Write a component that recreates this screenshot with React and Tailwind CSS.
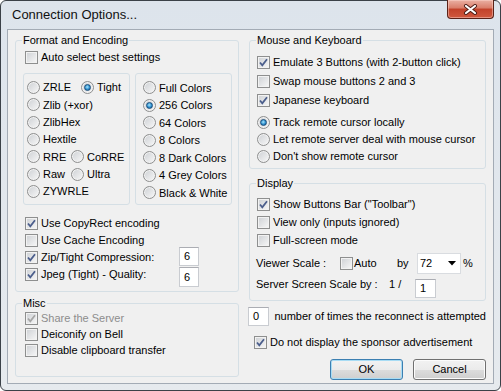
import React from 'react';

const CheckBox = ({ checked, disabled }) => (
    <span className="w-[13px] h-[13px] shrink-0 border border-[#8e8f8f] bg-gradient-to-br from-[#cdd0d4] to-[#f8f8f8] shadow-[inset_0_0_0_1px_#f2f2f2] flex items-center justify-center">
        {checked && (
            <svg width="11" height="11" viewBox="0 0 11 11">
                <path d="M2 5.5 L4.3 8.3 L9 2.2" fill="none" stroke={disabled ? '#a6a6a6' : '#4b5e8c'} strokeWidth="1.8" />
            </svg>
        )}
    </span>
);

const RadioDot = ({ checked }) => (
    <span className="w-[13px] h-[13px] shrink-0 rounded-full border border-[#8e8f8f] bg-gradient-to-br from-[#cdd0d4] to-[#f8f8f8] shadow-[inset_0_0_0_1px_#f2f2f2] flex items-center justify-center">
        {checked && (
            <span className="w-[7px] h-[7px] rounded-full border border-[#1b4f7c] bg-[radial-gradient(circle_at_45%_40%,#a9e6fc,#2d8fcf_55%,#0f4d86)]" />
        )}
    </span>
);

const Check = ({ checked, disabled, label, className = '' }) => (
    <div className={`flex items-center gap-[3px] ${className}`}>
        <CheckBox checked={checked} disabled={disabled} />
        <span className={`whitespace-nowrap ${disabled ? 'text-[#8d8d8d]' : ''}`}>{label}</span>
    </div>
);

const Radio = ({ checked, label, className = '' }) => (
    <div className={`flex items-center gap-[3px] ${className}`}>
        <RadioDot checked={checked} />
        <span className="whitespace-nowrap">{label}</span>
    </div>
);

const Field = ({ value, className = '' }) => (
    <div className={`bg-white border border-[#c9ccd1] border-t-[#abadb3] flex items-center pl-[4px] ${className}`}>
        {value}
    </div>
);

export default function App() {
    const groupBox = 'border border-[#d5dfe5] rounded-[3px] min-w-0';
    const legend = '-ml-[1px] px-[1px] leading-[13px]';

    return (
        <div className="w-[501px] h-[391px] bg-white font-['Liberation_Sans',Arial,sans-serif] text-[11px] text-black">
            <div className="w-full h-full rounded-[6px] border border-[#3b4148] bg-gradient-to-b from-[#dde4ec] to-[#e6eaee] flex flex-col px-[6px] pb-[6px]">
                {/* Title bar */}
                <div className="h-[28px] flex justify-between items-start">
                    <div className="h-[28px] flex items-center pl-[5px] text-[13px] text-[#111]">Connection Options...</div>
                    <div className="-mt-[1px] w-[47px] h-[19px] rounded-b-[4px] border border-[#5a2218] border-t-0 bg-[linear-gradient(#eab0a3,#d97d69_45%,#c2422a_50%,#d0583e)] flex items-center justify-center shadow-[inset_0_0_0_1px_rgba(255,220,210,0.45)]">
                        <svg width="15" height="11" viewBox="0 0 15 11">
                            <path d="M3 2 L12 9 M12 2 L3 9" stroke="#4a1b14" strokeWidth="4" strokeLinecap="round" />
                            <path d="M3 2 L12 9 M12 2 L3 9" stroke="#fff" strokeWidth="2.2" strokeLinecap="round" />
                        </svg>
                    </div>
                </div>

                {/* Client area */}
                <div className="flex-1 border border-[#a3abb5] bg-[#f0f0f0] flex gap-[10px] px-[7px] pt-[4px]">
                    {/* Left column */}
                    <div className="w-[224px] flex flex-col">
                        <fieldset className={`${groupBox} h-[258px] pl-[7px] pr-[6px]`}>
                            <legend className={legend}>Format and Encoding</legend>
                            <Check label="Auto select best settings" className="h-[16px] mt-[2px] ml-[2px]" />
                            <div className="flex justify-between mt-[8px]">
                                <div className={`${groupBox} w-[107px] h-[132px] pl-[3px] pt-[5px] flex flex-col`}>
                                    <div className="h-[17.33px] flex items-center">
                                        <Radio label="ZRLE" className="w-[54px]" />
                                        <Radio checked label="Tight" />
                                    </div>
                                    <Radio label="Zlib (+xor)" className="h-[17.33px]" />
                                    <Radio label="ZlibHex" className="h-[17.33px]" />
                                    <Radio label="Hextile" className="h-[17.33px]" />
                                    <div className="h-[17.33px] flex items-center">
                                        <Radio label="RRE" className="w-[44px]" />
                                        <Radio label="CoRRE" />
                                    </div>
                                    <div className="h-[17.33px] flex items-center">
                                        <Radio label="Raw" className="w-[44px]" />
                                        <Radio label="Ultra" />
                                    </div>
                                    <Radio label="ZYWRLE" className="h-[17.33px]" />
                                </div>
                                <div className={`${groupBox} w-[97px] h-[132px] pl-[7px] pt-[5px] flex flex-col`}>
                                    <Radio label="Full Colors" className="h-[17.5px]" />
                                    <Radio checked label="256 Colors" className="h-[17.5px]" />
                                    <Radio label="64 Colors" className="h-[17.5px]" />
                                    <Radio label="8 Colors" className="h-[17.5px]" />
                                    <Radio label="8 Dark Colors" className="h-[17.5px]" />
                                    <Radio label="4 Grey Colors" className="h-[17.5px]" />
                                    <Radio label="Black &amp; White" className="h-[17.5px]" />
                                </div>
                            </div>
                            <div className="flex flex-col mt-[10px] ml-[2px]">
                                <Check checked label="Use CopyRect encoding" className="h-[17px]" />
                                <Check label="Use Cache Encoding" className="h-[17px]" />
                                <div className="h-[17px] flex items-start">
                                    <Check checked label="Zip/Tight Compression:" className="h-[17px] w-[154px]" />
                                    <Field value="6" className="w-[20px] h-[19px] -mt-[2px]" />
                                </div>
                                <div className="h-[17px] flex items-start">
                                    <Check checked label="Jpeg (Tight) - Quality:" className="h-[17px] w-[154px]" />
                                    <Field value="6" className="w-[20px] h-[20px] mt-[1px]" />
                                </div>
                            </div>
                        </fieldset>

                        <fieldset className={`${groupBox} h-[80px] mt-[5px] pl-[9px]`}>
                            <legend className={legend + ' -ml-[3px]'}>Misc</legend>
                            <Check checked disabled label="Share the Server" className="h-[16px]" />
                            <Check label="Deiconify on Bell" className="h-[16px]" />
                            <Check label="Disable clipboard transfer" className="h-[16px]" />
                        </fieldset>
                    </div>

                    {/* Right column */}
                    <div className="w-[237px] flex flex-col">
                        <fieldset className={`${groupBox} h-[135px] pl-[7px]`}>
                            <legend className={legend}>Mouse and Keyboard</legend>
                            <div className="mt-[6px] flex flex-col">
                                <Check checked label="Emulate 3 Buttons (with 2-button click)" className="h-[19px]" />
                                <Check label="Swap mouse buttons 2 and 3" className="h-[19px]" />
                                <Check checked label="Japanese keyboard" className="h-[19px]" />
                            </div>
                            <div className="mt-[4px] flex flex-col">
                                <Radio checked label="Track remote cursor locally" className="h-[17px]" />
                                <Radio label="Let remote server deal with mouse cursor" className="h-[17px]" />
                                <Radio label="Don't show remote cursor" className="h-[17px]" />
                            </div>
                        </fieldset>

                        <fieldset className={`${groupBox} h-[124px] mt-[8px] pl-[7px]`}>
                            <legend className={legend}>Display</legend>
                            <div className="mt-[5px] flex flex-col">
                                <Check checked label={'Show Buttons Bar ("Toolbar")'} className="h-[18px]" />
                                <Check label="View only (inputs ignored)" className="h-[18px]" />
                                <Check label="Full-screen mode" className="h-[18px]" />
                            </div>
                            <div className="mt-[4px] h-[21px] -ml-[1px] flex items-center">
                                <span className="w-[84px]">Viewer Scale :</span>
                                <div className="w-[57px] flex items-center gap-[1px]">
                                    <CheckBox />
                                    <span>Auto</span>
                                </div>
                                <span className="w-[20px]">by</span>
                                <div className="w-[44px] h-[21px] bg-white border border-[#d9dce0] flex items-center justify-between pl-[2px] pr-[4px]">
                                    <span>72</span>
                                    <svg width="8" height="5" viewBox="0 0 8 5">
                                        <path d="M0 0 H8 L4 4.5 Z" fill="#000" />
                                    </svg>
                                </div>
                                <span className="ml-[2px]">%</span>
                            </div>
                            <div className="mt-[2px] -ml-[1px] flex items-start">
                                <span className="w-[133px] h-[16px] flex items-center">Server Screen Scale by :</span>
                                <span className="w-[26px] h-[16px] flex items-center">1 /</span>
                                <Field value="1" className="w-[21px] h-[19px] mt-[3px]" />
                            </div>
                        </fieldset>

                        <div className="mt-[6px] -ml-[1px] flex items-center">
                            <Field value="0" className="w-[24px] h-[19px] pl-[3px]" />
                            <span className="ml-[5px] whitespace-nowrap">number of times the reconnect is attempted</span>
                        </div>

                        <Check checked label="Do not display the sponsor advertisement" className="h-[16px] mt-[8px] ml-[5px]" />

                        <div className="mt-[9px] flex justify-end gap-[10px]">
                            <button className="w-[73px] h-[21px] rounded-[3px] border border-[#3c7fb1] bg-[linear-gradient(#f2f2f2,#ebebeb_50%,#dddddd_50%,#cfcfcf)] shadow-[inset_0_0_0_1px_#a8dcf4]">
                                OK
                            </button>
                            <button className="w-[73px] h-[21px] rounded-[3px] border border-[#707070] bg-[linear-gradient(#f2f2f2,#ebebeb_50%,#dddddd_50%,#cfcfcf)] shadow-[inset_0_0_0_1px_#fcfcfc]">
                                Cancel
                            </button>
                        </div>
                    </div>
                </div>
            </div>
        </div>
    );
}
